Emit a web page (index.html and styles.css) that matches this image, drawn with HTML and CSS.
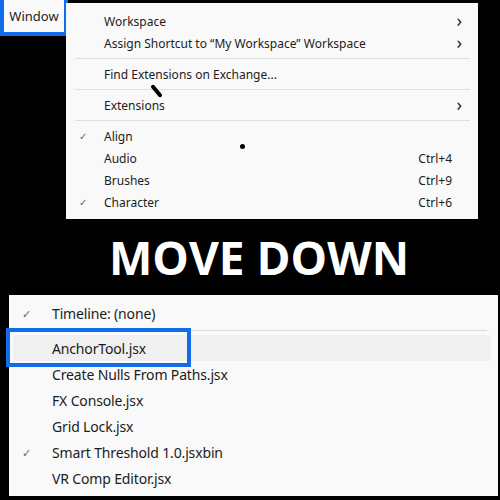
FILE: index.html
```html
<!DOCTYPE html>
<html>
<head>
	<title>Window menu - move down</title>
	<link rel="stylesheet" href="styles.css">
</head>
<body>
	<div class="top">
		<div class="tab"><span>Window</span></div>
		<div class="menu">
			<div class="row"><span class="label">Workspace</span><span class="chev">&#8250;</span></div>
			<div class="row"><span class="label">Assign Shortcut to “My Workspace” Workspace</span><span class="chev">&#8250;</span></div>
			<div class="sep"></div>
			<div class="row"><span class="label">Find Extensions on Exchange...</span></div>
			<div class="sep"></div>
			<div class="row"><span class="label">Extensions</span><span class="chev">&#8250;</span></div>
			<div class="sep"></div>
			<div class="row"><span class="check">&#10003;</span><span class="label">Align</span></div>
			<div class="row"><span class="label">Audio</span><span class="key">Ctrl+4</span></div>
			<div class="row"><span class="label">Brushes</span><span class="key">Ctrl+9</span></div>
			<div class="row"><span class="check">&#10003;</span><span class="label">Character</span><span class="key">Ctrl+6</span></div>
			<div class="stroke"></div>
			<div class="dot"></div>
		</div>
	</div>

	<h1 class="title">MOVE DOWN</h1>

	<div class="panel">
		<div class="row2"><span class="check2">&#10003;</span><span>Timeline: (none)</span></div>
		<div class="sep2"></div>
		<div class="row2 hover"><span>AnchorTool.jsx</span><div class="pick"></div></div>
		<div class="row2"><span>Create Nulls From Paths.jsx</span></div>
		<div class="row2"><span>FX Console.jsx</span></div>
		<div class="row2"><span>Grid Lock.jsx</span></div>
		<div class="row2"><span class="check2">&#10003;</span><span>Smart Threshold 1.0.jsxbin</span></div>
		<div class="row2"><span>VR Comp Editor.jsx</span></div>
	</div>
</body>
</html>
```
FILE: styles.css
```css
body {
	margin: 0;
	width: 500px;
	height: 500px;
	overflow: hidden;
	background-color: #000;
	font-family: "Noto Sans", "Open Sans", sans-serif;
	color: #1c1c1c;
}
.top {
	display: flex;
	align-items: flex-start;
}
.tab {
	width: 60px;
	height: 32px;
	background-color: #fafafa;
	border: 4px solid #126ee8;
	border-top: none;
	display: flex;
	align-items: center;
	justify-content: center;
	font-size: 13px;
}
.menu {
	position: relative;
	margin-top: 3px;
	margin-left: -2px;
	width: 412px;
	height: 216px;
	box-sizing: border-box;
	padding-top: 7px;
	background-color: #f9f9f9;
	font-size: 12px;
}
.row {
	height: 22px;
	display: flex;
	align-items: center;
	position: relative;
	padding-left: 38px;
	padding-right: 26px;
}
.label {
	flex: 1;
}
.check {
	position: absolute;
	left: 13px;
	font-size: 10px;
	color: #666;
}
.chev {
	font-size: 18px;
	margin-right: -10px;
	line-height: 1;
	padding-bottom: 3px;
}
.key {
	color: #1c1c1c;
}
.sep {
	height: 1px;
	margin: 4px 8px 4px 9px;
	background-color: #e0e0e0;
}
.stroke {
	position: absolute;
	left: 83px;
	top: 86px;
	width: 15px;
	height: 4px;
	border-radius: 2px;
	background-color: #000;
	transform: rotate(50deg);
}
.dot {
	position: absolute;
	left: 174px;
	top: 141px;
	width: 5px;
	height: 5px;
	border-radius: 50%;
	background-color: #000;
}
.title {
	margin: 0;
	height: 76px;
	display: flex;
	align-items: center;
	justify-content: center;
	padding-left: 18px;
	font-family: "Open Sans", sans-serif;
	font-weight: 700;
	font-size: 46px;
	color: #fff;
}
.panel {
	margin-left: 9px;
	width: 489px;
	height: 201px;
	box-sizing: border-box;
	padding-top: 5px;
	background-color: #f9f9f9;
	font-size: 14px;
	letter-spacing: -0.15px;
}
.row2 {
	height: 26px;
	display: flex;
	align-items: center;
	position: relative;
	padding-left: 43px;
}
.check2 {
	position: absolute;
	left: 13px;
	font-size: 11px;
	color: #666;
}
.sep2 {
	height: 1px;
	margin: 4px 11px 4px 9px;
	background-color: #dadada;
}
.hover {
	margin: 0 7px 0 4px;
	padding-left: 39px;
	border-radius: 4px;
	background-color: #f0f0f0;
}
.pick {
	position: absolute;
	left: -7px;
	top: -7px;
	width: 177px;
	height: 31px;
	border: 4px solid #126ee8;
}
```
